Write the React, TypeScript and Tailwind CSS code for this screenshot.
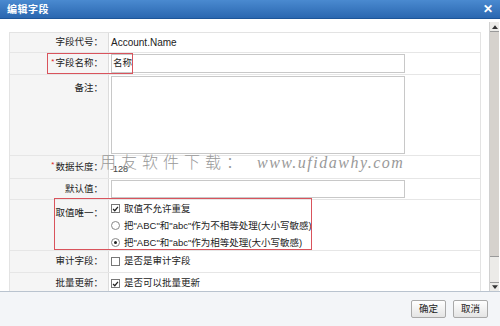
import React from "react";

const font = "font-['Liberation_Sans','Noto_Sans_CJK_SC',sans-serif]";

interface RowProps {
  label: string;
  required?: boolean;
  height: string;
  children?: React.ReactNode;
  align?: "center" | "start";
}

const Row: React.FC<RowProps> = ({ label, required, height, children, align = "center" }) => (
  <div className={`grid grid-cols-[99px_1fr] border-b border-[#e6e6e6] ${height}`}>
    <div
      className={`flex justify-end pr-[5px] bg-[#f5f5f5] border-r border-[#dcdcdc] text-[#222] ${
        align === "center" ? "items-center" : "items-start pt-[6px]"
      }`}
    >
      {required && <span className="text-[#d22] text-[8px] mr-[1px] -mt-[4px]">*</span>}
      <span>{label}：</span>
    </div>
    <div className={`flex pl-[2px] pr-[75px] ${align === "center" ? "items-center" : "items-start pt-[1px]"}`}>
      {children}
    </div>
  </div>
);

const Checkbox = ({ checked }: { checked: boolean }) => (
  <span className="inline-flex w-[9px] h-[9px] border border-[#777] bg-white items-center justify-center mr-[4px] shrink-0">
    {checked && (
      <svg viewBox="0 0 10 10" className="w-[8px] h-[8px]">
        <path d="M1.5 5 L4 7.5 L8.5 2" stroke="#222" strokeWidth="1.8" fill="none" />
      </svg>
    )}
  </span>
);

const Radio = ({ checked }: { checked: boolean }) => (
  <span className="inline-flex w-[9px] h-[9px] rounded-full border border-[#888] bg-white items-center justify-center mr-[4px] shrink-0">
    {checked && <span className="w-[3px] h-[3px] rounded-full bg-[#222]" />}
  </span>
);

const Input = ({ h = "h-[19px]" }: { h?: string }) => (
  <div className={`w-full ${h} border border-[#c8c8c8] bg-white`} />
);

export default function App() {
  return (
    <div className={`${font} w-[500px] h-[326px] flex flex-col bg-white text-[9.5px] overflow-hidden relative`}>
      {/* Title bar */}
      <div className="h-[19px] flex items-center justify-between px-[7px] bg-gradient-to-b from-[#4a8ad0] to-[#2a67b0] border-b border-[#1d5598]">
        <span className="text-white font-bold text-[10px] tracking-[0.5px]">编辑字段</span>
        <span className="text-white font-bold text-[12px] leading-none">✕</span>
      </div>

      {/* Body */}
      <div className="flex-1 flex min-h-0">
        <div className="flex-1 pt-[13px] pl-[9px] pr-[8px] overflow-hidden">
          <div className="border-t border-x border-[#e3e3e3]">
            <Row label="字段代号" height="h-[20px]">
              <span className="text-[#222] text-[10px]">Account.Name</span>
            </Row>
            <Row label="字段名称" required height="h-[22px]">
              <div className="w-full h-[19px] border border-[#c8c8c8] flex items-center pl-[1px] text-[#222]">名称</div>
            </Row>
            <Row label="备注" height="h-[81px]" align="start">
              <Input h="h-[78px]" />
            </Row>
            <Row label="数据长度" required height="h-[23px]">
              <span className="text-[#444] text-[9px] mt-[6px] ml-[2px]">128</span>
            </Row>
            <Row label="默认值" height="h-[21px]">
              <Input h="h-[18px]" />
            </Row>
            <Row label="取值唯一" height="h-[51px]" align="start">
              <div className="flex flex-col gap-[6px] text-[#222] pt-[2px]">
                <div className="flex items-center leading-[11px]">
                  <Checkbox checked />
                  取值不允许重复
                </div>
                <div className="flex items-center leading-[11px]">
                  <Radio checked={false} />
                  把"ABC"和"abc"作为不相等处理(大小写敏感)
                </div>
                <div className="flex items-center leading-[11px]">
                  <Radio checked />
                  把"ABC"和"abc"作为相等处理(大小写敏感)
                </div>
              </div>
            </Row>
            <Row label="审计字段" height="h-[22px]">
              <div className="flex items-center text-[#222]">
                <Checkbox checked={false} />
                是否是审计字段
              </div>
            </Row>
            <Row label="批量更新" height="h-[22px]">
              <div className="flex items-center text-[#222]">
                <Checkbox checked />
                是否可以批量更新
              </div>
            </Row>
          </div>
        </div>

        {/* Scrollbar */}
        <div className="w-[10px] mt-[3px] mr-[1px] flex flex-col bg-[#ecebe8] border-l border-[#d0d0d0]">
          <div className="h-[9px] flex items-center justify-center">
            <svg viewBox="0 0 8 5" className="w-[6px] h-[4px]">
              <path d="M0 5 L4 0 L8 5 Z" fill="#333" />
            </svg>
          </div>
          <div className="h-[226px] bg-[#d6d2cd] border-y border-[#999]" />
          <div className="flex-1" />
          <div className="h-[9px] flex items-center justify-center border-t border-[#999]">
            <svg viewBox="0 0 8 5" className="w-[6px] h-[4px]">
              <path d="M0 0 L4 5 L8 0 Z" fill="#333" />
            </svg>
          </div>
        </div>
      </div>

      {/* Footer */}
      <div className="h-[35px] flex items-center justify-end gap-[7px] pr-[12px] bg-[#f3f5f8] border-t border-[#b9c3cf]">
        <button className="w-[35px] h-[18px] border border-[#a9a9a9] rounded-[2px] bg-gradient-to-b from-white to-[#e4e4e4] text-[9.5px] text-[#222]">
          确定
        </button>
        <button className="w-[35px] h-[18px] border border-[#a9a9a9] rounded-[2px] bg-gradient-to-b from-white to-[#e4e4e4] text-[9.5px] text-[#222]">
          取消
        </button>
      </div>

      {/* Red highlight boxes */}
      <div className="absolute left-[47px] top-[53px] w-[86px] h-[21px] border border-[#d9535c] pointer-events-none" />
      <div className="absolute left-[54px] top-[198px] w-[258px] h-[52px] border border-[#d9535c] pointer-events-none" />

      {/* Watermark */}
      <div className="absolute left-[100px] top-[151px] flex items-center gap-[10px] text-[#999] pointer-events-none">
        <span className="text-[16px] tracking-[5px] font-light">用友软件下载：</span>
        <span className="text-[16px] italic font-['Liberation_Serif',serif] tracking-[1.5px]">www.ufidawhy.com</span>
      </div>
    </div>
  );
}
